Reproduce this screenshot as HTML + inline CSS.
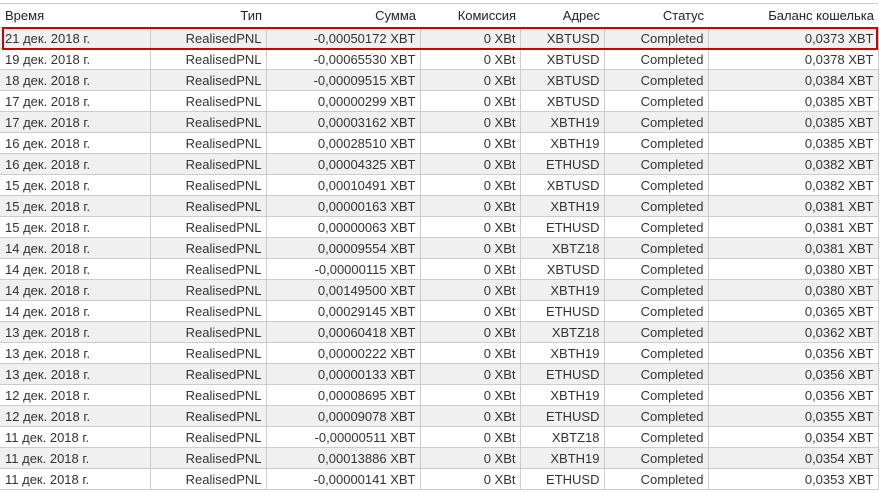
<!DOCTYPE html>
<html><head><meta charset="utf-8"><style>
body{margin:0;background:#fff;width:879px;height:493px;overflow:hidden;font-family:"Liberation Sans","DejaVu Sans",sans-serif;font-size:13px;color:#333}
table{position:absolute;left:0;top:3px;border-collapse:collapse;table-layout:fixed;width:878px}
th{font-weight:normal;height:23px;text-align:right;padding:0 4px;border-top:1px solid #ccc;border-bottom:1px solid #ccc;white-space:nowrap;color:#222}
th:first-child{text-align:left;padding-left:5px}
td{height:20px;padding:0 4px;text-align:right;border:1px solid #ccc;border-top:none;white-space:nowrap;overflow:hidden}
td:first-child{text-align:left;padding-left:5px;border-left:none}
td:last-child{border-right:1px solid #ccc}
tr:nth-child(odd) td{background:#f0f0f0}
#box{position:absolute;left:2px;top:27px;width:872px;height:19px;border:2px solid #c00}
</style></head><body>
<table>
<colgroup><col style="width:150px"><col style="width:116px"><col style="width:154px"><col style="width:100px"><col style="width:84px"><col style="width:104px"><col style="width:170px"></colgroup>
<thead><tr><th>Время</th><th>Тип</th><th>Сумма</th><th>Комиссия</th><th>Адрес</th><th>Статус</th><th>Баланс кошелька</th></tr></thead>
<tbody>
<tr><td>21 дек. 2018 г.</td><td>RealisedPNL</td><td>-0,00050172 XBT</td><td>0 XBt</td><td>XBTUSD</td><td>Completed</td><td>0,0373 XBT</td></tr>
<tr><td>19 дек. 2018 г.</td><td>RealisedPNL</td><td>-0,00065530 XBT</td><td>0 XBt</td><td>XBTUSD</td><td>Completed</td><td>0,0378 XBT</td></tr>
<tr><td>18 дек. 2018 г.</td><td>RealisedPNL</td><td>-0,00009515 XBT</td><td>0 XBt</td><td>XBTUSD</td><td>Completed</td><td>0,0384 XBT</td></tr>
<tr><td>17 дек. 2018 г.</td><td>RealisedPNL</td><td>0,00000299 XBT</td><td>0 XBt</td><td>XBTUSD</td><td>Completed</td><td>0,0385 XBT</td></tr>
<tr><td>17 дек. 2018 г.</td><td>RealisedPNL</td><td>0,00003162 XBT</td><td>0 XBt</td><td>XBTH19</td><td>Completed</td><td>0,0385 XBT</td></tr>
<tr><td>16 дек. 2018 г.</td><td>RealisedPNL</td><td>0,00028510 XBT</td><td>0 XBt</td><td>XBTH19</td><td>Completed</td><td>0,0385 XBT</td></tr>
<tr><td>16 дек. 2018 г.</td><td>RealisedPNL</td><td>0,00004325 XBT</td><td>0 XBt</td><td>ETHUSD</td><td>Completed</td><td>0,0382 XBT</td></tr>
<tr><td>15 дек. 2018 г.</td><td>RealisedPNL</td><td>0,00010491 XBT</td><td>0 XBt</td><td>XBTUSD</td><td>Completed</td><td>0,0382 XBT</td></tr>
<tr><td>15 дек. 2018 г.</td><td>RealisedPNL</td><td>0,00000163 XBT</td><td>0 XBt</td><td>XBTH19</td><td>Completed</td><td>0,0381 XBT</td></tr>
<tr><td>15 дек. 2018 г.</td><td>RealisedPNL</td><td>0,00000063 XBT</td><td>0 XBt</td><td>ETHUSD</td><td>Completed</td><td>0,0381 XBT</td></tr>
<tr><td>14 дек. 2018 г.</td><td>RealisedPNL</td><td>0,00009554 XBT</td><td>0 XBt</td><td>XBTZ18</td><td>Completed</td><td>0,0381 XBT</td></tr>
<tr><td>14 дек. 2018 г.</td><td>RealisedPNL</td><td>-0,00000115 XBT</td><td>0 XBt</td><td>XBTUSD</td><td>Completed</td><td>0,0380 XBT</td></tr>
<tr><td>14 дек. 2018 г.</td><td>RealisedPNL</td><td>0,00149500 XBT</td><td>0 XBt</td><td>XBTH19</td><td>Completed</td><td>0,0380 XBT</td></tr>
<tr><td>14 дек. 2018 г.</td><td>RealisedPNL</td><td>0,00029145 XBT</td><td>0 XBt</td><td>ETHUSD</td><td>Completed</td><td>0,0365 XBT</td></tr>
<tr><td>13 дек. 2018 г.</td><td>RealisedPNL</td><td>0,00060418 XBT</td><td>0 XBt</td><td>XBTZ18</td><td>Completed</td><td>0,0362 XBT</td></tr>
<tr><td>13 дек. 2018 г.</td><td>RealisedPNL</td><td>0,00000222 XBT</td><td>0 XBt</td><td>XBTH19</td><td>Completed</td><td>0,0356 XBT</td></tr>
<tr><td>13 дек. 2018 г.</td><td>RealisedPNL</td><td>0,00000133 XBT</td><td>0 XBt</td><td>ETHUSD</td><td>Completed</td><td>0,0356 XBT</td></tr>
<tr><td>12 дек. 2018 г.</td><td>RealisedPNL</td><td>0,00008695 XBT</td><td>0 XBt</td><td>XBTH19</td><td>Completed</td><td>0,0356 XBT</td></tr>
<tr><td>12 дек. 2018 г.</td><td>RealisedPNL</td><td>0,00009078 XBT</td><td>0 XBt</td><td>ETHUSD</td><td>Completed</td><td>0,0355 XBT</td></tr>
<tr><td>11 дек. 2018 г.</td><td>RealisedPNL</td><td>-0,00000511 XBT</td><td>0 XBt</td><td>XBTZ18</td><td>Completed</td><td>0,0354 XBT</td></tr>
<tr><td>11 дек. 2018 г.</td><td>RealisedPNL</td><td>0,00013886 XBT</td><td>0 XBt</td><td>XBTH19</td><td>Completed</td><td>0,0354 XBT</td></tr>
<tr><td>11 дек. 2018 г.</td><td>RealisedPNL</td><td>-0,00000141 XBT</td><td>0 XBt</td><td>ETHUSD</td><td>Completed</td><td>0,0353 XBT</td></tr>
</tbody></table>
<div id="box"></div>
</body></html>
